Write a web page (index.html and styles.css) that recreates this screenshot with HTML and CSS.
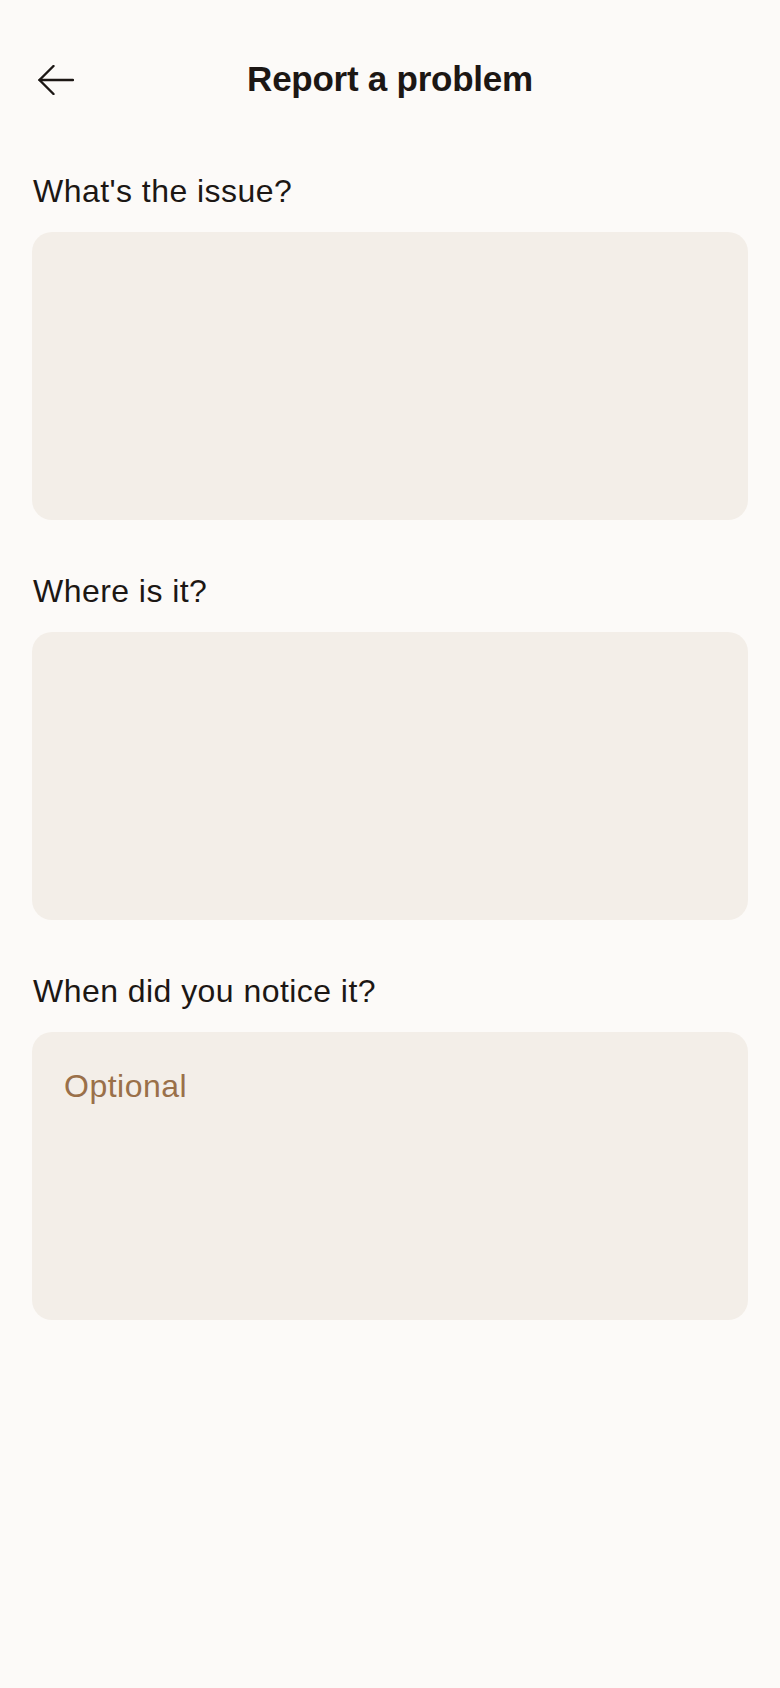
FILE: index.html
```html
<!DOCTYPE html>
<html lang="en">
<head>
<meta charset="utf-8">
<title>Report a problem</title>
<link rel="stylesheet" href="styles.css">
</head>
<body>
<div class="screen">
  <header class="topbar">
    <button class="back" aria-label="Back">
      <svg width="36" height="30" viewBox="0 0 36 30" fill="none" stroke="#1c1714" stroke-width="2.4" stroke-linecap="round" stroke-linejoin="round">
        <path d="M35 15H1.5"/>
        <path d="M15.5 1L1.5 15L15.5 29"/>
      </svg>
    </button>
    <h1 class="title">Report a problem</h1>
  </header>
  <form class="form">
    <div class="field">
      <label class="label">What's the issue?</label>
      <div class="box"></div>
    </div>
    <div class="field">
      <label class="label">Where is it?</label>
      <div class="box"></div>
    </div>
    <div class="field">
      <label class="label">When did you notice it?</label>
      <div class="box"><span class="placeholder">Optional</span></div>
    </div>
  </form>
</div>
</body>
</html>
```

FILE: styles.css
```css
html, body {
  margin: 0;
  padding: 0;
  background: #fcfaf8;
}
body {
  font-family: "Liberation Sans", Arial, sans-serif;
  color: #1c1714;
}
.screen {
  width: 780px;
  min-height: 1688px;
  box-sizing: border-box;
  padding: 57px 32px 0;
}
.topbar {
  position: relative;
  height: 44px;
  display: flex;
  align-items: center;
  justify-content: center;
}
.back {
  position: absolute;
  left: 6px;
  top: 8px;
  width: 36px;
  height: 30px;
  padding: 0;
  border: 0;
  background: none;
  display: flex;
}
.title {
  margin: 0;
  font-size: 35px;
  line-height: 44px;
  font-weight: 700;
  letter-spacing: -0.25px;
  color: #1c1714;
}
.form {
  margin-top: 70px;
  display: flex;
  flex-direction: column;
  gap: 51px;
}
.field {
  display: flex;
  flex-direction: column;
  gap: 21px;
}
.label {
  font-size: 32px;
  line-height: 40px;
  letter-spacing: 0.45px;
  margin-left: 1px;
}
.box {
  height: 288px;
  background: #f3eee8;
  border-radius: 20px;
  box-sizing: border-box;
  padding: 34px 32px;
}
.placeholder {
  display: block;
  font-size: 32px;
  line-height: 40px;
  letter-spacing: 0.5px;
  color: #9a7049;
}
```
